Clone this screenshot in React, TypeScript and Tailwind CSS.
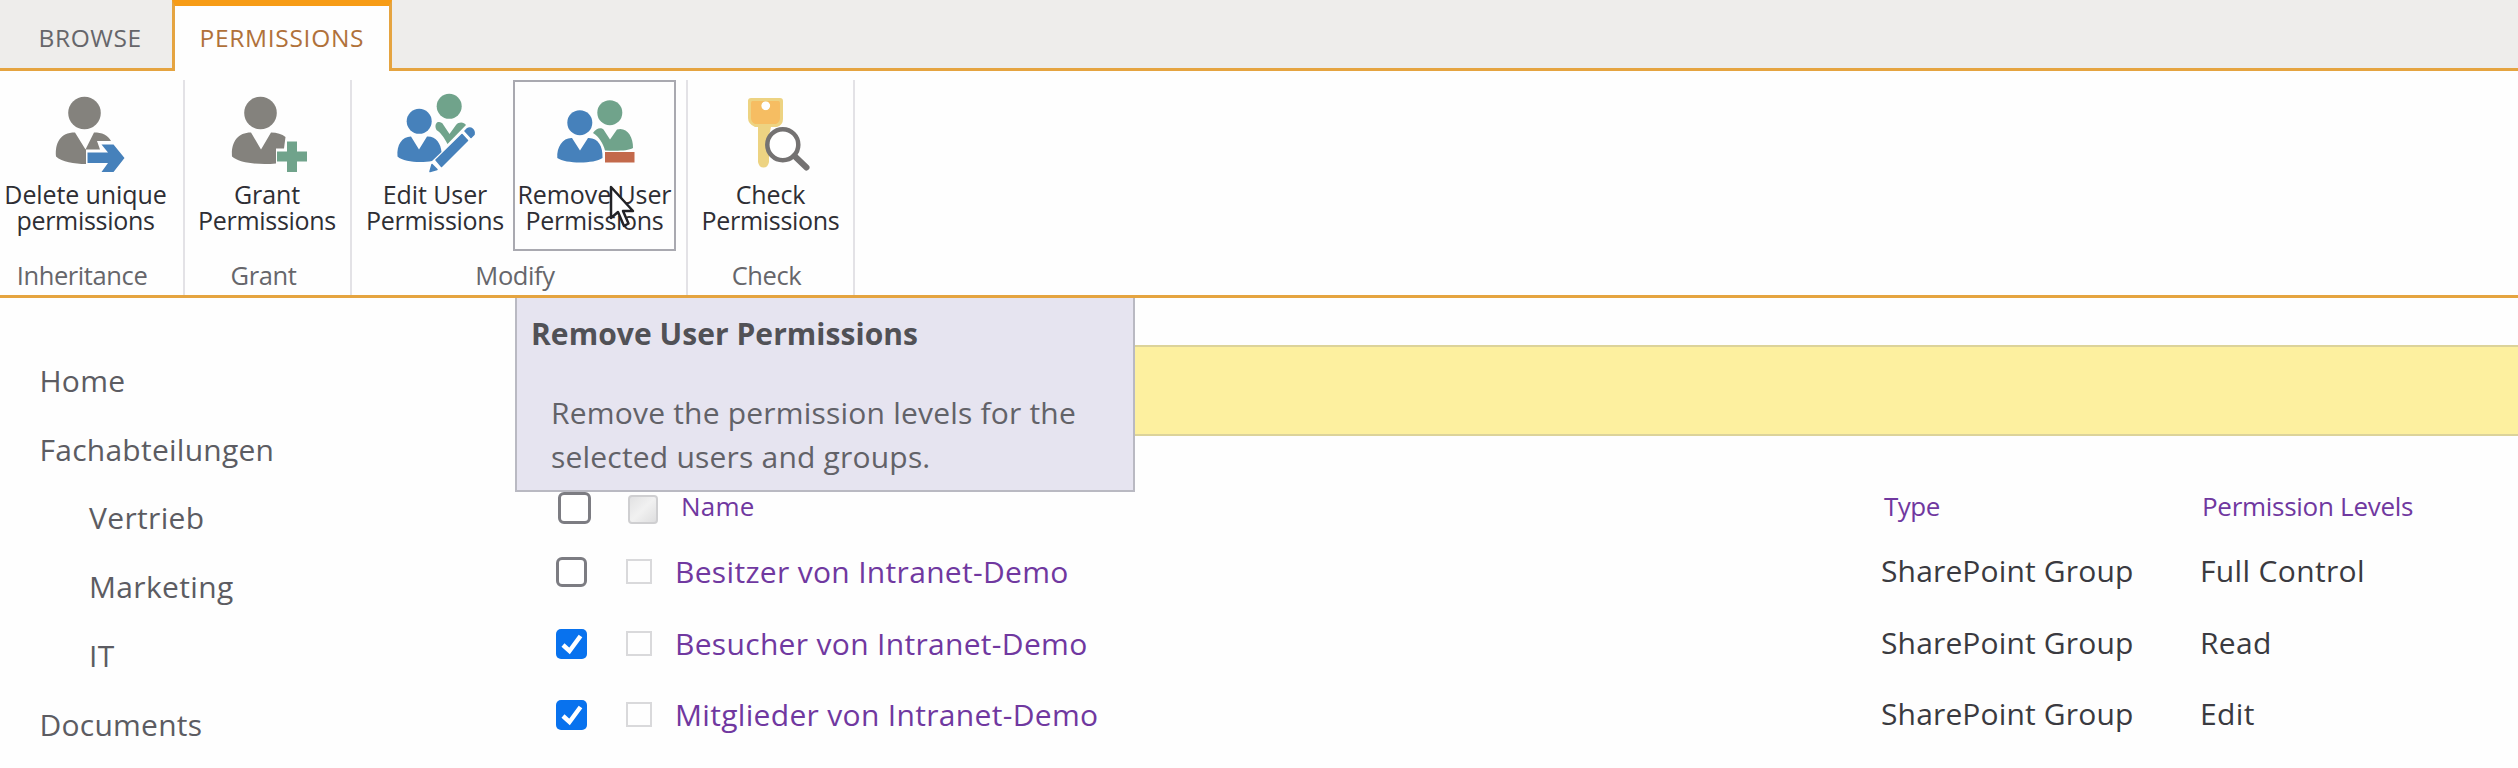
import type { ReactNode } from "react";

interface Group {
  name: string;
  type: string;
  level: string;
  checked: boolean;
}

const groups: Group[] = [
  { name: "Besitzer von Intranet-Demo", type: "SharePoint Group", level: "Full Control", checked: false },
  { name: "Besucher von Intranet-Demo", type: "SharePoint Group", level: "Read", checked: true },
  { name: "Mitglieder von Intranet-Demo", type: "SharePoint Group", level: "Edit", checked: true },
];

const navItems = [
  { label: "Home", sub: false },
  { label: "Fachabteilungen", sub: false },
  { label: "Vertrieb", sub: true },
  { label: "Marketing", sub: true },
  { label: "IT", sub: true },
  { label: "Documents", sub: false },
];

const Svg = ({ children }: { children: ReactNode }) => (
  <svg width="80" height="80" viewBox="0 0 80 80" className="shrink-0 overflow-visible">{children}</svg>
);

const InheritIcon = () => (
  <Svg>
    <circle cx="38.5" cy="19" r="16.3" fill="#84827d" />
    <path d="M29 38.5 L39.5 55.5 L48 38.5 C56 38.5 62 41 65 47 H51 L54 55.5 H40 V70 C28 70 16 68 10 62.5 C9 49 14 38.5 29 38.5Z" fill="#84827d" />
    <path d="M41.5 58.5 H62 L55.5 50.5 H67.5 L78.5 64 L67.5 78 H55.5 L62 69 H41.5Z" fill="#4681bb" />
  </Svg>
);

const GrantIcon = () => (
  <Svg>
    <circle cx="33.5" cy="19" r="16.3" fill="#84827d" />
    <path d="M24 38.5 L34 55.5 L44 38.5 C50 38.5 55 40 58.5 43 L57 54.5 H49 V69.5 C33 71 13 69.5 5 62.5 C4 49 10 38.5 24 38.5Z" fill="#84827d" />
    <path d="M60 47.5 H70 V57.5 H80 V67.5 H70 V78 H60 V67.5 H50 V57.5 H60Z" fill="#70a38b" />
  </Svg>
);

const EditIcon = () => (
  <Svg>
    <circle cx="54.2" cy="12.3" r="12.5" fill="#70a38b" />
    <path d="M42 28.5 C44 27.5 47 28 48.5 31 L54.5 40 L61 31 C64 27.5 69 28 71 31 L52.5 50 C49 43 45 38 41.5 36 C40 33.5 40 30 42 28.5Z" fill="#70a38b" />
    <circle cx="24.2" cy="27.3" r="12.5" fill="#4681bb" />
    <path d="M16 42.5 L24 55.5 L32 42.5 C41 42 46 50 46.5 58 L37 67 C27 69 9 68.5 2.5 62.5 C1.5 51 7 42.5 16 42.5Z" fill="#4681bb" />
    <path d="M35 77.5 L37 70.5 L42 75.5Z M41 66 L67 40.5 L72.5 46.5 L46.5 72.5Z M70 37 L72 35 C76 32.5 80 36 79 40.5 L76 43.5Z" fill="#4681bb" stroke="#4681bb" strokeWidth="1.5" strokeLinejoin="round" />
  </Svg>
);

const RemoveIcon = () => (
  <Svg>
    <circle cx="54.8" cy="18.7" r="12.5" fill="#70a38b" />
    <path d="M38 39 C41 34 46 33 48.5 35.5 L55 45.5 L62 35.5 C71 32.5 78.5 42 78 54 C73 57 62 57 50 56.5 C48 49 44 43 38 39Z" fill="#70a38b" />
    <circle cx="24.8" cy="28.7" r="12.5" fill="#4681bb" />
    <path d="M17 44 L25 56.5 L33 44 C43 43.5 48 52 47.5 64 C39 70 11 70 2.3 64 C1.5 53 8 43.5 17 44Z" fill="#4681bb" />
    <rect x="50" y="58" width="29.5" height="10.5" fill="#c3694b" />
  </Svg>
);

const CheckIcon = () => (
  <Svg>
    <path fillRule="evenodd" d="M20 4 H49 Q52 4 52 7 V25 Q52 31 46 33 H40 L38 42 V68 Q37 73.5 32.5 73.5 Q28 73.5 27 68 V33 H24 Q17 30 17 24 V7 Q17 4 20 4Z M34.7 7.2 A4.5 4.5 0 1 0 34.7 16.2 A4.5 4.5 0 1 0 34.7 7.2Z" fill="#edd382" />
    <path fillRule="evenodd" d="M21.5 7 H47.5 Q49 7 49 9 V24 Q49 28 45 30 H24 Q20 28 20 24 V9 Q20 7 21.5 7Z M34.7 7.2 A4.5 4.5 0 1 0 34.7 16.2 A4.5 4.5 0 1 0 34.7 7.2Z" fill="#f6bd62" />
    <circle cx="51.8" cy="50.7" r="15.5" fill="#fff" stroke="#747272" strokeWidth="4.5" />
    <path d="M63.5 62 L75.5 73.5" stroke="#747272" strokeWidth="6" strokeLinecap="round" />
  </Svg>
);

const RibbonButton = ({ icon, lines, className }: { icon: ReactNode; lines: string[]; className: string }) => (
  <button className={`flex h-[171px] shrink-0 flex-col items-center border-2 pt-[12px] ${className}`}>
    {icon}
    <span className="mt-[7px] flex flex-col items-center text-[25px] leading-[26px] whitespace-nowrap text-[#2e2e34]">
      <span className="tracking-[-0.1px]">{lines[0]}</span>
      <span className="tracking-[-0.3px]">{lines[1]}</span>
    </span>
  </button>
);

const RibbonGroup = ({ label, className, children }: { label: string; className: string; children: ReactNode }) => (
  <section className={`flex h-[215px] shrink-0 flex-col border-r-2 border-[#e3e2e6] ${className}`}>
    <div className="flex">{children}</div>
    <div className="mt-[7px] pr-[8px] text-center text-[25.5px] leading-[34px] tracking-[-0.4px] text-[#66666b]">{label}</div>
  </section>
);

const Checkbox = ({ checked, className }: { checked: boolean; className: string }) =>
  checked ? (
    <span className={`flex items-center justify-center rounded-[5px] bg-[#0872ee] ${className}`}>
      <svg width="22" height="22" viewBox="0 0 22 22" fill="none">
        <path d="M2 12 L8.5 18 L19.5 3" stroke="#fff" strokeWidth="4.5" />
      </svg>
    </span>
  ) : (
    <span className={`block rounded-[6px] border-[3px] border-[#7c7c82] bg-white ${className}`} />
  );

const Tooltip = () => (
  <div className="absolute top-[298px] left-[515px] h-[194px] w-[620px] border-2 border-t-0 border-[#b9b9c2] bg-[#e6e4f0] text-[30px] text-[#626268]">
    <h3 className="pt-[14px] pl-[14px] leading-[44px] font-bold tracking-[0.05px] text-[#515156]">Remove User Permissions</h3>
    <p className="mt-[35px] pl-[34px] leading-[43.6px] tracking-[0.2px]">
      Remove the permission levels for the
      <br />
      selected users and groups.
    </p>
  </div>
);

const Cursor = () => (
  <svg width="28" height="46" viewBox="0 0 28 46" className="absolute top-[185px] left-[609px]">
    <path d="M2 2 V33 L9 27 L15 41 L19.5 38.5 L14 26 H24Z" fill="#fff" stroke="#222226" strokeWidth="2.5" strokeLinejoin="round" />
  </svg>
);

export default function App() {
  return (
    <div className="relative h-[768px] w-[2518px] overflow-hidden bg-[#fefefe] font-['Open_Sans',sans-serif]">
      <header className="flex h-[71px] text-[24.5px] leading-[34px]">
        <div className="w-[172px] border-b-[3px] border-[#e5a440] bg-[#eeedeb] pt-[21px] pl-[38.5px] tracking-[0.6px] text-[#66666a]">BROWSE</div>
        <div className="w-[220px] border-x-[3px] border-t-[6px] border-x-[#e5a440] border-t-[#f79c16] pt-[15px] pl-[24.5px] tracking-[0.7px] text-[#b0713a]">PERMISSIONS</div>
        <div className="flex-1 border-b-[3px] border-[#e5a440] bg-[#eeedeb]" />
      </header>

      <div className="flex h-[227px] border-b-[3px] border-[#e5a440] pt-[9px]">
        <RibbonGroup label="Inheritance" className="w-[185px] pr-[11px]">
          <RibbonButton className="w-[171px] border-transparent" icon={<InheritIcon />} lines={["Delete unique", "permissions"]} />
        </RibbonGroup>
        <RibbonGroup label="Grant" className="w-[167px]">
          <RibbonButton className="ml-[6px] w-[152px] border-transparent" icon={<GrantIcon />} lines={["Grant", "Permissions"]} />
        </RibbonGroup>
        <RibbonGroup label="Modify" className="w-[336px]">
          <RibbonButton className="ml-[6px] w-[154px] border-transparent" icon={<EditIcon />} lines={["Edit User", "Permissions"]} />
          <RibbonButton className="ml-px w-[163px] border-[#a9a9b0]" icon={<RemoveIcon />} lines={["Remove User", "Permissions"]} />
        </RibbonGroup>
        <RibbonGroup label="Check" className="w-[167px]">
          <RibbonButton className="ml-[6px] w-[153px] border-transparent" icon={<CheckIcon />} lines={["Check", "Permissions"]} />
        </RibbonGroup>
      </div>

      <main className="flex text-[30px]">
        <nav className="w-[540px] shrink-0 pt-[49px] pl-[39.5px] leading-[68.7px] text-[#5c5c62]">
          {navItems.map((item) => (
            <div key={item.label} className={item.sub ? "pl-[49.5px] tracking-[0.35px]" : "tracking-[0.25px]"}>
              {item.label}
            </div>
          ))}
        </nav>

        <div className="flex-1 pt-[47px]">
          <div className="h-[91px] border-y-2 border-[#dcd39a] bg-[#fdf09f]" />

          <div className="mt-[46px] grid h-[54px] grid-cols-[86px_48px_1207px_319px_1fr] items-center text-[26px] leading-[48px] text-[#7038a0]">
            <Checkbox checked={false} className="mb-[2px] ml-[18px] h-[32px] w-[33px]" />
            <span className="ml-[2px] h-[29px] w-[30px] rounded-[4px] border-2 border-[#cfcfd1] bg-linear-to-br from-[#e2e2e3] via-[#f1f1f1] to-[#dededf]" />
            <span className="self-start pl-[7px] tracking-[0.2px]">Name</span>
            <span className="self-start pl-[3px] tracking-[-0.5px]">Type</span>
            <span className="self-start pl-[2px] tracking-[-0.28px]">Permission Levels</span>
          </div>

          {groups.map((g) => (
            <div key={g.name} className="grid h-[71.6px] grid-cols-[86px_48px_1207px_319px_1fr] items-center leading-[71.6px] text-[#3a3a40]">
              <Checkbox checked={g.checked} className="mt-px ml-[16px] h-[30px] w-[31px]" />
              <span className="h-[25px] w-[26px] border-2 border-[#d9d9db]" />
              <span className="pl-px tracking-[0.32px] text-[#7038a0]">{g.name}</span>
              <span className="pb-[2px] leading-[69.6px] tracking-[0.15px]">{g.type}</span>
              <span className="pb-[2px] leading-[69.6px] tracking-[0.35px]">{g.level}</span>
            </div>
          ))}
        </div>
      </main>

      <Tooltip />
      <Cursor />
    </div>
  );
}
